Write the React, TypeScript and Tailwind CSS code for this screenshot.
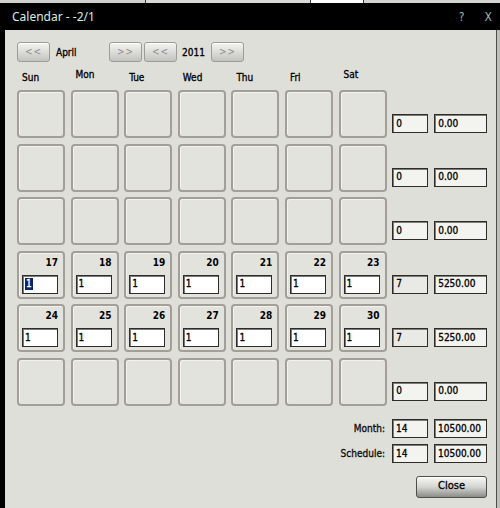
import React from "react";

const FONT = { fontFamily: "'DejaVu Sans Condensed', 'Liberation Sans', sans-serif" };

type Row = { days: (number | null)[]; a: string; b: string; grayA?: boolean };

const rows: Row[] = [
  { days: [null, null, null, null, null, null, null], a: "0", b: "0.00" },
  { days: [null, null, null, null, null, null, null], a: "0", b: "0.00" },
  { days: [null, null, null, null, null, null, null], a: "0", b: "0.00" },
  { days: [17, 18, 19, 20, 21, 22, 23], a: "7", b: "5250.00", grayA: true },
  { days: [24, 25, 26, 27, 28, 29, 30], a: "7", b: "5250.00", grayA: true },
  { days: [null, null, null, null, null, null, null], a: "0", b: "0.00" },
];

const headers = [
  { t: "Sun", up: false },
  { t: "Mon", up: true },
  { t: "Tue", up: false },
  { t: "Wed", up: false },
  { t: "Thu", up: false },
  { t: "Fri", up: false },
  { t: "Sat", up: true },
];

function NavButton({ label }: { label: string }) {
  return (
    <div className="w-[33px] h-[20px] rounded-[3px] border border-[#9c9c98] bg-linear-to-b from-[#f4f4f2] via-[#dcdcd8] to-[#c2c2be] shadow-[inset_0_1px_0_#ffffff] flex items-center justify-center text-[10px] leading-none text-[#8e8e8c] tracking-[1px] [-webkit-text-stroke:0px]">
      {label}
    </div>
  );
}

function TotalBox({ value, width, gray }: { value: string; width: string; gray?: boolean }) {
  return (
    <div
      className={`${width} h-[19px] border border-[#2e2c28] shadow-[inset_1px_1px_0_#7e7c78] ${gray ? "bg-[#e9e9e5]" : "bg-[#f3f3ef]"} flex items-center pl-[3px] text-[10px] leading-none text-black [-webkit-text-stroke:0.3px_black]`}
    >
      {value}
    </div>
  );
}

function DayCell({ day, selected }: { day: number | null; selected?: boolean }) {
  return (
    <div className="w-[48px] h-[48px] shrink-0 rounded-[4px] border-2 border-[#a39f98] bg-[#e3e3de] shadow-[inset_1px_1px_0_#f2f2ee] flex flex-col">
      {day !== null && (
        <>
          <div className="h-[12px] mt-[4px] pr-[5px] text-right text-[10px] leading-[12px] font-bold text-black">
            {day}
          </div>
          <div className="mt-[6px] ml-[3px] w-[36px] h-[19px] bg-white border border-[#2c2c2c] shadow-[inset_1px_1px_0_#7a7a7a] flex items-center pl-[2px] text-[10px] leading-none text-black [-webkit-text-stroke:0.3px_black]">
            {selected ? (
              <span className="bg-[#0a246a] text-white px-[1px] py-[1px] [-webkit-text-stroke:0.3px_white]">1</span>
            ) : (
              "1"
            )}
          </div>
        </>
      )}
    </div>
  );
}

export default function App() {
  return (
    <div className="w-[500px] h-[508px] bg-black flex flex-col overflow-hidden" style={FONT}>
      {/* strip of window behind */}
      <div className="h-[3px] flex">
        <div className="w-[145px] bg-[#cfcfcd]" />
        <div className="w-[1px] bg-[#3a3a3a]" />
        <div className="w-[164px] bg-[#d8d8d6]" />
        <div className="w-[1px] bg-[#3a3a3a]" />
        <div className="w-[52px] bg-white" />
        <div className="w-[1px] bg-[#3a3a3a]" />
        <div className="flex-1 bg-[#d4d4d2]" />
      </div>

      {/* title bar */}
      <div className="h-[27px] flex items-center pl-[12px] pr-[8px]">
        <span
          className="text-[12px] text-[#d6ece2] leading-none"
          style={{ fontFamily: "'Noto Sans', 'Liberation Sans', sans-serif" }}
        >
          Calendar - -2/1
        </span>
        <div className="flex-1" />
        <span className="text-[12px] text-[#a3b2ab] leading-none mr-[20px]">?</span>
        <span className="text-[12px] text-[#a3b2ab] leading-none">X</span>
      </div>

      <div className="flex-1 flex">
        <div className="w-[5px] bg-black" />
        <div className="flex-1 bg-[#dfdfda] border-r border-[#4c4c4a] pl-[12px] pt-[12px] flex flex-col text-black [-webkit-text-stroke:0.3px_black]">
          {/* navigation */}
          <div className="h-[20px] flex items-center">
            <NavButton label="<<" />
            <div className="w-[59px] pl-[6px] text-[10px]">April</div>
            <NavButton label=">>" />
            <div className="w-[2px]" />
            <NavButton label="<<" />
            <div className="w-[34px] pl-[5px] text-[10px]">2011</div>
            <NavButton label=">>" />
          </div>

          {/* day headers */}
          <div className="h-[28px] flex gap-[5.6px]">
            {headers.map((h) => (
              <div
                key={h.t}
                className={`w-[48px] pl-[5px] text-[10px] leading-[12px] ${h.up ? "pt-[7px]" : "pt-[10px]"}`}
              >
                {h.t}
              </div>
            ))}
          </div>

          {/* calendar rows */}
          <div className="flex flex-col gap-[5.5px] [-webkit-text-stroke:0px]">
            {rows.map((r, ri) => (
              <div key={ri} className="flex items-end gap-[5.6px] h-[48px]">
                {r.days.map((d, di) => (
                  <DayCell key={di} day={d} selected={d === 17} />
                ))}
                <div className="flex gap-[6px] mb-[5px]">
                  <TotalBox value={r.a} width="w-[36px]" gray={r.grayA} />
                  <TotalBox value={r.b} width="w-[53px]" />
                </div>
              </div>
            ))}
          </div>

          {/* totals */}
          <div className="mt-[13.5px] flex flex-col gap-[6px] pr-[9px]">
            <div className="flex items-center justify-end">
              <span className="text-[10px] text-[#1a1a1a] mr-[7px]">Month:</span>
              <TotalBox value="14" width="w-[36px]" />
              <div className="w-[6px]" />
              <TotalBox value="10500.00" width="w-[53px]" />
            </div>
            <div className="flex items-center justify-end">
              <span className="text-[10px] text-[#1a1a1a] mr-[7px]">Schedule:</span>
              <TotalBox value="14" width="w-[36px]" />
              <div className="w-[6px]" />
              <TotalBox value="10500.00" width="w-[53px]" />
            </div>
          </div>

          <div className="mt-[12.5px] flex justify-end pr-[9px]">
            <div className="w-[71px] h-[22px] rounded-[3px] border border-[#4e4e4a] bg-linear-to-b from-[#f8f8f6] via-[#d4d4d0] to-[#8c8c88] shadow-[inset_0_1px_0_#ffffff] flex items-center justify-center text-[11px] text-black">
              Close
            </div>
          </div>
        </div>
        <div className="w-[3px] bg-[#bdbdb9]" />
      </div>
    </div>
  );
}
